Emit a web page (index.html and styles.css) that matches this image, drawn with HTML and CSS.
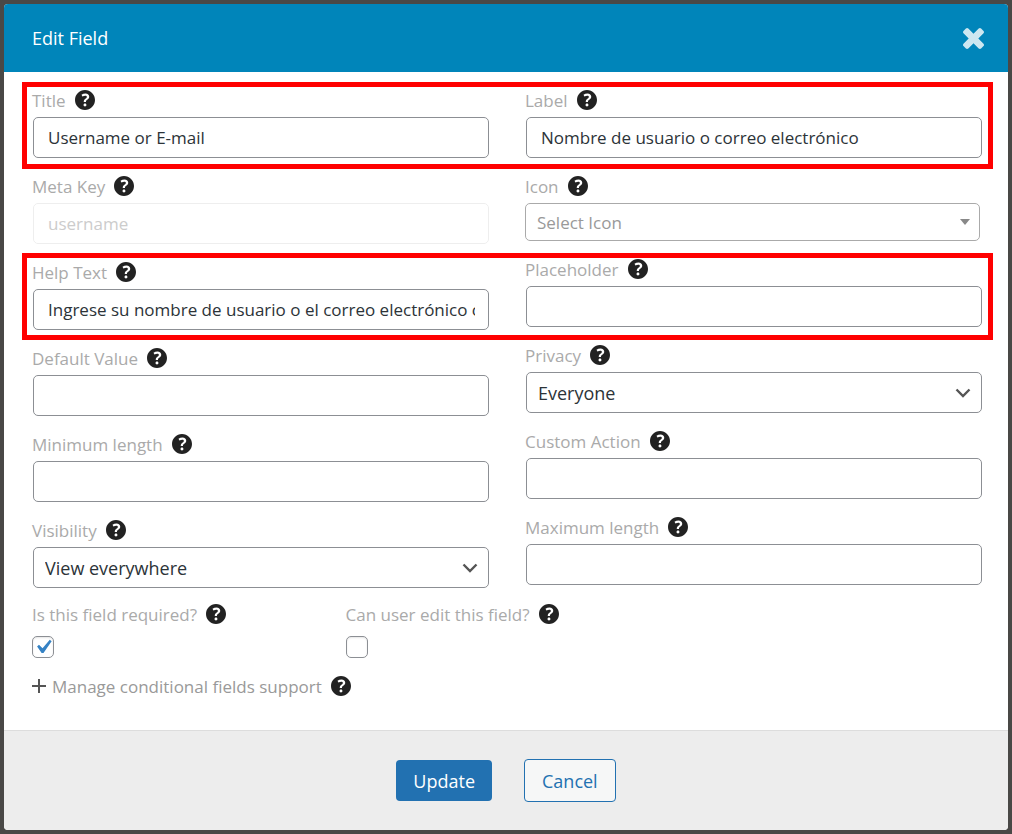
FILE: index.html
```html
<!DOCTYPE html>
<html lang="en">
<head>
  <meta charset="UTF-8">
  <title>Edit Field</title>
  <link rel="stylesheet" href="styles.css">
</head>
<body>
  <svg class="sprite" aria-hidden="true">
    <symbol id="help" viewBox="3 3 14 14">
      <path d="M17 10c0-3.87-3.14-7-7-7-3.87 0-7 3.13-7 7s3.13 7 7 7c3.86 0 7-3.13 7-7zm-6.3 1.48H9.14v-.43c0-.38.08-.7.24-.98s.46-.57.88-.89c.41-.29.68-.53.81-.71.14-.18.2-.39.2-.62 0-.25-.09-.44-.28-.58-.19-.13-.45-.19-.79-.19-.58 0-1.25.15-2 .46l-.64-1.28c.87-.49 1.8-.74 2.77-.74.81 0 1.45.2 1.92.58.48.39.71.91.71 1.55 0 .43-.09.8-.29 1.11-.19.32-.57.67-1.11 1.06-.38.28-.61.49-.71.63-.1.15-.15.34-.15.57v.46zm-1.47 2.74c-.18-.17-.27-.42-.27-.73 0-.33.08-.58.26-.75s.43-.25.77-.25c.32 0 .57.09.75.26s.27.42.27.74c0 .3-.09.55-.27.72-.18.18-.43.27-.75.27-.33 0-.58-.09-.76-.26z"/>
    </symbol>
  </svg>

  <form class="modal">
    <header class="modal-header">
      <h1>Edit Field</h1>
      <button type="button" class="close" aria-label="Close">
        <svg viewBox="302 342 1188 1188"><path d="M1490 1298q0 40-28 68l-136 136q-28 28-68 28t-68-28l-294-294-294 294q-28 28-68 28t-68-28l-136-136q-28-28-28-68t28-68l294-294-294-294q-28-28-28-68t28-68l136-136q28-28 68-28t68 28l294 294 294-294q28-28 68-28t68 28l136 136q28 28 28 68t-28 68l-294 294 294 294q28 28 28 68z"/></svg>
      </button>
    </header>

    <main class="modal-body">
      <div class="columns">
        <div class="column">
          <div class="field">
            <label for="title">Title <svg class="help"><use href="#help"/></svg></label>
            <input type="text" id="title" value="Username or E-mail">
          </div>
          <div class="field">
            <label for="metakey">Meta Key <svg class="help"><use href="#help"/></svg></label>
            <input type="text" id="metakey" value="username" disabled>
          </div>
          <div class="field">
            <label for="helptext">Help Text <svg class="help"><use href="#help"/></svg></label>
            <input type="text" id="helptext" value="Ingrese su nombre de usuario o el correo electrónico con">
          </div>
          <div class="field">
            <label for="default">Default Value <svg class="help"><use href="#help"/></svg></label>
            <input type="text" id="default">
          </div>
          <div class="field">
            <label for="minlength">Minimum length <svg class="help"><use href="#help"/></svg></label>
            <input type="text" id="minlength">
          </div>
          <div class="field">
            <label for="visibility">Visibility <svg class="help"><use href="#help"/></svg></label>
            <select id="visibility">
              <option>View everywhere</option>
            </select>
          </div>
        </div>

        <div class="column">
          <div class="field">
            <label for="label">Label <svg class="help"><use href="#help"/></svg></label>
            <input type="text" id="label" value="Nombre de usuario o correo electrónico">
          </div>
          <div class="field">
            <label for="icon">Icon <svg class="help"><use href="#help"/></svg></label>
            <select id="icon" class="select-icon">
              <option>Select Icon</option>
            </select>
          </div>
          <div class="field">
            <label for="placeholder">Placeholder <svg class="help"><use href="#help"/></svg></label>
            <input type="text" id="placeholder">
          </div>
          <div class="field">
            <label for="privacy">Privacy <svg class="help"><use href="#help"/></svg></label>
            <select id="privacy">
              <option>Everyone</option>
            </select>
          </div>
          <div class="field">
            <label for="action">Custom Action <svg class="help"><use href="#help"/></svg></label>
            <input type="text" id="action">
          </div>
          <div class="field">
            <label for="maxlength">Maximum length <svg class="help"><use href="#help"/></svg></label>
            <input type="text" id="maxlength">
          </div>
        </div>
      </div>

      <div class="checks">
        <div class="check">
          <label for="required">Is this field required? <svg class="help"><use href="#help"/></svg></label>
          <input type="checkbox" id="required" checked>
        </div>
        <div class="check">
          <label for="editable">Can user edit this field? <svg class="help"><use href="#help"/></svg></label>
          <input type="checkbox" id="editable">
        </div>
      </div>

      <a href="#" class="conditional">
        <svg class="plus" viewBox="0 0 14 14"><path d="M7 0v14M0 7h14"/></svg>
        Manage conditional fields support
        <svg class="help"><use href="#help"/></svg>
      </a>

      <div class="highlight highlight-title"></div>
      <div class="highlight highlight-help"></div>
    </main>

    <footer class="modal-footer">
      <button type="submit" class="btn-update">Update</button>
      <button type="button" class="btn-cancel">Cancel</button>
    </footer>
  </form>
</body>
</html>
```
FILE: styles.css
```css
* {
  box-sizing: border-box;
}
body {
  margin: 0;
  padding: 4px;
  background: #494846;
  font-family: "Open Sans", "Noto Sans", sans-serif;
  font-size: 17px;
  color: #2c3338;
}
.sprite {
  display: none;
}
.modal {
  border-radius: 4px;
  overflow: hidden;
  background: #fff;
}
.modal-header {
  display: flex;
  align-items: center;
  justify-content: space-between;
  height: 68px;
  padding: 0 24px 0 28px;
  background: #0085ba;
}
h1 {
  margin: 0;
  font-size: 18px;
  font-weight: 400;
  color: #fff;
}
.close {
  padding: 0;
  border: none;
  background: none;
  cursor: pointer;
}
.close svg {
  display: block;
  width: 21px;
  height: 21px;
  fill: #cce7f1;
}
.modal-body {
  position: relative;
  padding: 16px 26px 32px 28px;
}
.columns {
  display: grid;
  grid-template-columns: 1fr 1fr;
  gap: 36px;
}
.column {
  display: flex;
  flex-direction: column;
  gap: 16px;
  min-width: 0;
}
.field {
  display: flex;
  flex-direction: column;
}
label {
  display: flex;
  align-items: center;
  gap: 9px;
  height: 24px;
  color: #aaa;
}
.help {
  width: 20px;
  height: 20px;
  fill: #222;
}
.field input, .field select {
  height: 41px;
  margin: 5px 0 0 1px;
  padding: 0 13px 0 14px;
  border: 1px solid #8c8f94;
  border-radius: 5px;
  background: #fff;
  font: inherit;
  color: #2c3338;
}
.field input:disabled {
  border-color: #eee;
  color: #ccc;
}
.field select {
  appearance: none;
  padding: 0 32px 0 11px;
  font-size: 18px;
  background: #fff url("data:image/svg+xml,%3Csvg xmlns='http://www.w3.org/2000/svg' width='16' height='10'%3E%3Cpath d='M1.5 1.5L8 8l6.500-6.500' fill='none' stroke='%23555' stroke-width='2.400'/%3E%3C/svg%3E") no-repeat right 10px center;
}
.field .select-icon {
  height: 38px;
  margin: 5px 2px 0 0;
  border-color: #aaa;
  color: #999;
  font-size: 17px;
  background: #fff url("data:image/svg+xml,%3Csvg xmlns='http://www.w3.org/2000/svg' width='10' height='6'%3E%3Cpath d='M0 0h10L5 6z' fill='%23888'/%3E%3C/svg%3E") no-repeat right 9px center;
}
.checks {
  display: flex;
  margin-top: 14px;
}
.check {
  flex: 0 0 33%;
}
.check input {
  display: block;
  appearance: none;
  width: 22px;
  height: 22px;
  margin: 10px 0 0;
  border: 1px solid #8c8f94;
  border-radius: 5px;
  background: #fff;
  box-shadow: inset 0 1px 2px rgba(0,0,0,0.1);
}
.check input:checked {
  background: #fff url("data:image/svg+xml,%3Csvg xmlns='http://www.w3.org/2000/svg' viewBox='0 0 20 20'%3E%3Cpath d='M14.83 4.89l1.34.94-5.81 8.38H9.02L5.78 9.67l1.34-1.25 2.57 2.4z' fill='%233582c4'/%3E%3C/svg%3E") no-repeat center / 28px;
}
.conditional {
  display: flex;
  align-items: center;
  width: fit-content;
  gap: 6px;
  height: 24px;
  margin-top: 16px;
  color: #999;
  text-decoration: none;
}
.conditional .help {
  margin-left: 3px;
}
.plus {
  width: 14px;
  height: 14px;
  stroke: #555;
  stroke-width: 2;
}
.highlight {
  position: absolute;
  left: 18px;
  right: 15px;
  height: 87px;
  border: 5px solid #f00;
  pointer-events: none;
}
.highlight-title {
  top: 10px;
}
.highlight-help {
  top: 181px;
}
.modal-footer {
  display: flex;
  align-items: center;
  justify-content: center;
  gap: 32px;
  height: 100px;
  border-top: 1px solid #ddd;
  background: #ededed;
}
.modal-footer button {
  padding: 0 17px;
  border-radius: 4px;
  font: inherit;
  font-size: 18px;
  cursor: pointer;
}
.btn-update {
  height: 41px;
  border: none;
  background: #2271b1;
  color: #fff;
}
.btn-cancel {
  height: 43px;
  border: 1px solid #2271b1;
  background: #f6f7f7;
  color: #2271b1;
}
```
